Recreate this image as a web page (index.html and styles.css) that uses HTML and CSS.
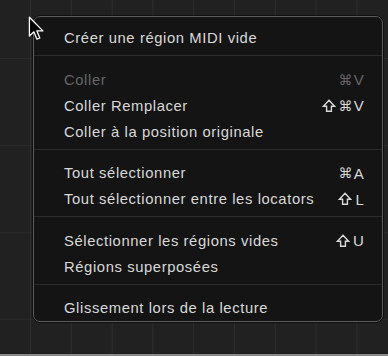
FILE: index.html
```html
<!DOCTYPE html>
<html lang="fr">
<head>
<meta charset="utf-8">
<link rel="stylesheet" href="styles.css">
</head>
<body>
<div class="canvas">
  <div class="menu">
    <div class="item"><span class="label">Créer une région MIDI vide</span></div>
    <div class="sep"></div>
    <div class="item disabled"><span class="label">Coller</span><span class="key"><span class="cmd">⌘</span>V</span></div>
    <div class="item"><span class="label">Coller Remplacer</span><span class="key"><svg class="shift" viewBox="0 0 14 14"><path d="M7 1.2 L12.6 7.2 H9.4 V12.3 H4.6 V7.2 H1.4 Z"/></svg><span class="cmd">⌘</span>V</span></div>
    <div class="item"><span class="label">Coller à la position originale</span></div>
    <div class="sep"></div>
    <div class="item"><span class="label">Tout sélectionner</span><span class="key"><span class="cmd">⌘</span>A</span></div>
    <div class="item"><span class="label">Tout sélectionner entre les locators</span><span class="key"><svg class="shift" viewBox="0 0 14 14"><path d="M7 1.2 L12.6 7.2 H9.4 V12.3 H4.6 V7.2 H1.4 Z"/></svg>L</span></div>
    <div class="sep"></div>
    <div class="item"><span class="label">Sélectionner les régions vides</span><span class="key"><svg class="shift" viewBox="0 0 14 14"><path d="M7 1.2 L12.6 7.2 H9.4 V12.3 H4.6 V7.2 H1.4 Z"/></svg>U</span></div>
    <div class="item"><span class="label">Régions superposées</span></div>
    <div class="sep"></div>
    <div class="item"><span class="label">Glissement lors de la lecture</span></div>
  </div>
  <svg class="cursor" width="17" height="26" viewBox="0 0 14 22">
    <path d="M1 1 L1 17 L4.8 13.4 L7.4 19.6 L9.8 18.6 L7.3 12.6 L12.4 12.6 Z" fill="#000" stroke="#fff" stroke-width="1.1" stroke-linejoin="round"/>
  </svg>
  <div class="bottom"></div>
</div>
</body>
</html>
```
FILE: styles.css
```css
* { box-sizing: border-box; }
html, body { margin: 0; padding: 0; }
body { width: 388px; height: 356px; overflow: hidden; background: #202020; }
.canvas {
  position: relative;
  width: 388px;
  height: 356px;
  background-color: #212121;
  background-image:
    linear-gradient(to right, #2e2e2e 0 1px, transparent 1px),
    linear-gradient(to bottom, #2a2a2a 0 1px, transparent 1px);
  background-size: 40.8px 100%, 100% 87px;
  background-position: 30px 0, 0 58px;
  padding: 16px 5px 0 33px;
  font-family: "Liberation Sans", Arial, sans-serif;
}
.menu {
  width: 350px;
  height: 306px;
  background: #141414;
  border: 1px solid #5c5c5c;
  border-radius: 7px;
  padding: 8px 0 0 0;
  box-shadow: 0 0 0 0.5px #000;
}
.item {
  display: flex;
  justify-content: space-between;
  align-items: center;
  height: 26px;
  padding: 0 18px 0 30px;
  font-size: 14.8px;
  color: #d9d9d9;
}
.label { letter-spacing: 0.6px; }
.item.disabled { color: #666666; }
.key { display: flex; align-items: center; font-size: 15px; letter-spacing: 0.2px; }
.cmd { font-family: "DejaVu Sans", sans-serif; font-size: 14px; margin-right: 1px; }
.shift { width: 14px; height: 14px; margin-right: 3px; fill: none; stroke: currentColor; stroke-width: 1.4; stroke-linejoin: miter; }
.sep {
  height: 1px;
  background: #2b2b2b;
  margin: 4px 0 10.5px 0;
}
.cursor { position: absolute; left: 28px; top: 16px; }
.bottom { position: absolute; left: 0; right: 0; bottom: 0; height: 2px; background: #8a8a8a; }
```
